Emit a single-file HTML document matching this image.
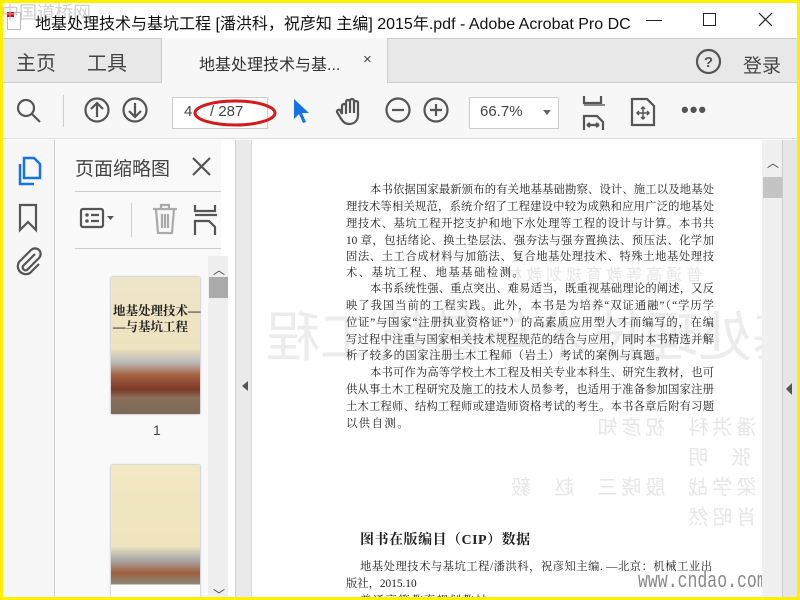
<!DOCTYPE html>
<html><head><meta charset="utf-8"><style>
*{margin:0;padding:0;box-sizing:border-box}
body{width:800px;height:600px;overflow:hidden;background:#ffef00;font-family:"Liberation Sans","Noto Sans CJK SC",sans-serif;position:relative}
.abs{position:absolute}
#win{left:3px;top:3px;width:794px;height:594px;background:#fff;overflow:hidden}
.title{left:0;top:0;width:794px;height:35px;background:#fff;font-size:16px;color:#111}
.tabs{left:0;top:35px;width:794px;height:45px;background:#e8e8e8;border-top:1px solid #ccc;border-bottom:1px solid #ccc}
.tb{left:0;top:80px;width:794px;height:56px;background:#f7f7f7;border-bottom:1px solid #ddd}
.ic{stroke:#555;fill:none;stroke-width:2.2}
.pl{font-family:"Liberation Serif","Noto Serif CJK SC",serif;font-size:11.3px;color:#222;position:absolute;left:343px;width:368px;text-align:justify;text-align-last:justify;white-space:nowrap;letter-spacing:0}
</style></head><body>
<div id="win" class="abs">
<div class="abs title">
 <div class="abs" style="left:4px;top:9px;width:14px;height:18px;background:#fff;border:1px solid #bbb"></div>
 <div class="abs" style="left:4px;top:9px;width:7px;height:5px;background:#e00"></div>
 <div class="abs" style="left:-2px;top:-4px;font-size:18px;color:#bbb;opacity:.7">中国道桥网</div>
 <div class="abs" style="left:32px;top:7px;white-space:nowrap">地基处理技术与基坑工程 [潘洪科，祝彦知 主编] 2015年.pdf - Adobe Acrobat Pro DC</div>
 <div class="abs" style="left:643px;top:17px;width:16px;height:1px;background:#222"></div>
 <div class="abs" style="left:700px;top:10px;width:13px;height:13px;border:1px solid #222"></div>
 <svg class="abs" style="left:755px;top:9px" width="15" height="15"><path d="M1 1L14 14M14 1L1 14" stroke="#222" stroke-width="1.2"/></svg>
</div>
<div class="abs tabs">
 <div class="abs" style="left:13px;top:8px;font-size:20px;color:#444">主页</div>
 <div class="abs" style="left:84px;top:8px;font-size:20px;color:#444">工具</div>
 <div class="abs" style="left:158px;top:-1px;width:227px;height:45px;background:#f7f7f7;border-left:1px solid #ccc;border-right:1px solid #ccc"></div>
 <div class="abs" style="left:196px;top:12px;font-size:16px;color:#333">地基处理技术与基...</div>
 <div class="abs" style="left:360px;top:12px;font-size:15px;color:#444">×</div>
 <svg class="abs" style="left:692px;top:9px" width="27" height="27"><circle cx="13.5" cy="13.5" r="11.5" class="ic"/><text x="13.5" y="19" font-size="15" font-weight="bold" text-anchor="middle" fill="#555" font-family="Liberation Sans">?</text></svg>
 <div class="abs" style="left:740px;top:12px;font-size:19px;color:#444">登录</div>
</div>
<div class="abs tb">
 <svg class="abs" style="left:12px;top:14px" width="30" height="30"><circle cx="11" cy="11" r="8" class="ic"/><path d="M17 17L25 25" class="ic" stroke-width="3"/></svg>
 <div class="abs" style="left:60px;top:12px;width:1px;height:32px;background:#ccc"></div>
 <svg class="abs" style="left:81px;top:14px" width="30" height="30"><circle cx="13" cy="13" r="11.5" class="ic"/><path d="M13 20V6M7 12L13 6L19 12" class="ic"/></svg>
 <svg class="abs" style="left:119px;top:14px" width="30" height="30"><circle cx="13" cy="13" r="11.5" class="ic"/><path d="M13 6V20M7 14L13 20L19 14" class="ic"/></svg>
 <div class="abs" style="left:169px;top:14px;width:96px;height:32px;background:#fff;border:1px solid #ccc"></div>
 <div class="abs" style="left:181px;top:20px;font-size:15px;color:#444">4</div>
 <div class="abs" style="left:207px;top:20px;font-size:15px;color:#444">/ 287</div>
 <svg class="abs" style="left:190px;top:10px" width="100" height="40"><ellipse cx="42" cy="20" rx="40" ry="12" fill="none" stroke="#d51a1a" stroke-width="3"/></svg>
 <svg class="abs" style="left:287px;top:14px" width="24" height="30"><path d="M4 2L4 22L9 17L13 26L16 25L12 16L19 16Z" fill="#1473e6"/></svg>
 <svg class="abs" style="left:332px;top:13px" width="32" height="32"><path d="M7 18V10a2 2 0 0 1 4 0V6a2 2 0 0 1 4 0V5a2 2 0 0 1 4 0v2a2 2 0 0 1 4 0v12c0 6-4 9-9 9c-4 0-6-2-9-7l-3-5a2 2 0 0 1 3-2z M11 10v8M15 6v11M19 7v10" class="ic" stroke-width="2"/></svg>
 <svg class="abs" style="left:382px;top:14px" width="30" height="30"><circle cx="13" cy="13" r="11.5" class="ic"/><path d="M7 13H19" class="ic"/></svg>
 <svg class="abs" style="left:420px;top:14px" width="30" height="30"><circle cx="13" cy="13" r="11.5" class="ic"/><path d="M7 13H19M13 7V19" class="ic"/></svg>
 <div class="abs" style="left:466px;top:14px;width:90px;height:32px;background:#fff;border:1px solid #ccc"></div>
 <div class="abs" style="left:477px;top:20px;font-size:15px;color:#444">66.7%</div>
 <div class="abs" style="left:540px;top:27px;border:4px solid transparent;border-top:5px solid #666"></div>
 <svg class="abs" style="left:578px;top:13px" width="26" height="34"><path d="M3 0V7H20V0M3 34V20H16L22 26V34M6 29H18M6 29l3-2M6 29l3 2M18 29l-3-2M18 29l-3 2" class="ic" stroke-width="2"/><path d="M3 9H24" stroke="#888" stroke-width="2"/></svg>
 <svg class="abs" style="left:627px;top:14px" width="26" height="30"><path d="M2 2H17L24 9V28H2Z" class="ic" stroke-width="2"/><path d="M13 10V22M7 16H19M11 12l2-2 2 2M11 20l2 2 2-2M9 14l-2 2 2 2M17 14l2 2-2 2" stroke="#555" fill="none" stroke-width="1.5"/></svg>
 <div class="abs" style="left:678px;top:14px;font-size:22px;color:#555;letter-spacing:1px;font-weight:bold">•••</div>
</div>
<div class="abs" style="left:0;top:137px;width:52px;height:460px;background:#f7f7f7;border-right:1px solid #ccc"></div>
<svg class="abs" style="left:13px;top:153px" width="28" height="30"><path d="M8 2H18L24 8V22H8Z M4 8V28H18" stroke="#1473e6" stroke-width="2.5" fill="none"/></svg>
<svg class="abs" style="left:14px;top:200px" width="24" height="30"><path d="M3 2H19V27L11 19L3 27Z" class="ic"/></svg>
<svg class="abs" style="left:10px;top:243px" width="32" height="32"><path d="M22 8L10 20a3 3 0 0 0 4 4L26 12a5.5 5.5 0 0 0-8-8L6 16a8 8 0 0 0 11 11l9-9" class="ic" stroke="#777" stroke-width="2.5"/></svg>
<div class="abs" style="left:53px;top:137px;width:165px;height:460px;background:#f9f9f9"></div>
<div class="abs" style="left:72px;top:151px;font-size:19px;color:#444">页面缩略图</div>
<svg class="abs" style="left:187px;top:152px" width="24" height="24"><path d="M3 3L20 20M20 3L3 20" stroke="#555" stroke-width="2.2"/></svg>
<div class="abs" style="left:72px;top:188px;width:146px;height:1px;background:#ccc"></div>
<svg class="abs" style="left:76px;top:203px" width="40" height="26"><rect x="2" y="3" width="22" height="18" rx="2" class="ic" stroke-width="2"/><circle cx="8" cy="9" r="1.8" fill="#555"/><circle cx="8" cy="15" r="1.8" fill="#555"/><path d="M12 9H20M12 15H20" class="ic" stroke-width="2"/><path d="M28 10h7l-3.5 4z" fill="#555"/></svg>
<div class="abs" style="left:128px;top:200px;width:1px;height:34px;background:#ccc"></div>
<svg class="abs" style="left:148px;top:200px" width="28" height="32"><path d="M2 6H26M10 6V2H18V6M5 6L7 30H21L23 6M11 11V25M14 11V25M17 11V25" stroke="#aaa" stroke-width="2.2" fill="none"/></svg>
<svg class="abs" style="left:190px;top:202px" width="26" height="32"><path d="M2 0V6H22V0M2 10H24M2 30V16H16L22 22V30" stroke="#555" stroke-width="2.2" fill="none"/></svg>
<div class="abs" style="left:72px;top:245px;width:146px;height:1px;background:#ccc"></div>
<div class="abs" style="left:205px;top:253px;width:20px;height:344px;background:#eee"></div>
<div class="abs" style="left:210px;top:258px;font-size:12px;color:#444">︿</div>
<div class="abs" style="left:206px;top:274px;width:19px;height:21px;background:#aaa"></div>
<div class="abs" style="left:210px;top:583px;font-size:12px;color:#444">﹀</div>
<div class="abs" style="left:232px;top:137px;width:1px;height:460px;background:#ccc"></div>
<div class="abs" style="left:233px;top:137px;width:15px;height:460px;background:#eaeaea"></div>
<div class="abs" style="left:239px;top:378px;border:5px solid transparent;border-right:6px solid #555;border-left:0"></div>
<div class="abs" style="left:108px;top:274px;width:89px;height:137px;box-shadow:0 0 2px #999;background:linear-gradient(#efe6c8 0%,#eee3bf 52%,#bbb 62%,#a5603f 72%,#7a3828 82%,#8a6e58 88%,#7a6a58 100%)"></div>
<div class="abs" style="left:110px;top:298px;font-family:'Liberation Serif','Noto Serif CJK SC',serif;font-weight:bold;font-size:12.5px;color:#222;white-space:nowrap">地基处理技术—</div>
<div class="abs" style="left:110px;top:314px;font-family:'Liberation Serif','Noto Serif CJK SC',serif;font-weight:bold;font-size:12.5px;color:#222;white-space:nowrap">—与基坑工程</div>
<div class="abs" style="left:150px;top:419px;font-size:14px;color:#444">1</div>
<div class="abs" style="left:108px;top:462px;width:89px;height:135px;box-shadow:0 0 2px #999;background:linear-gradient(#f2e8c4 0%,#efe4bd 60%,#aaa 70%,#a06040 80%,#887 88%,#fff 89%,#fff 100%)"></div>
<div class="abs" style="left:248px;top:137px;width:511px;height:460px;background:#fff;border-left:1px solid #ddd;overflow:hidden">
 <div class="abs" style="left:14px;top:153px;font-size:54px;color:#ececec;transform:scaleX(-1);white-space:nowrap;font-family:'Noto Sans CJK SC',sans-serif">地基处理技术与基坑工程</div>
 <div class="abs" style="left:250px;top:121px;font-size:16px;color:#e6e6e6;transform:scaleX(-1);letter-spacing:4px">普通高等教育规划教材</div>
 <div class="abs" style="left:255px;top:273px;font-size:20px;color:#e6e6e6;transform:scaleX(-1);letter-spacing:4px;line-height:30px;white-space:pre">主  编  潘洪科  祝彦知
副主编  张  明
参  编  梁学战  殷晓三  赵  毅
主  审  肖昭然</div>
</div>
<div class="pl" style="top:178px;padding-left:24px">本书依据国家最新颁布的有关地基基础勘察、设计、施工以及地基处</div>
<div class="pl" style="top:195px">理技术等相关规范，系统介绍了工程建设中较为成熟和应用广泛的地基处</div>
<div class="pl" style="top:212px">理技术、基坑工程开挖支护和地下水处理等工程的设计与计算。本书共</div>
<div class="pl" style="top:229px">10 章，包括绪论、换土垫层法、强夯法与强夯置换法、预压法、化学加</div>
<div class="pl" style="top:245px">固法、土工合成材料与加筋法、复合地基处理技术、特殊土地基处理技</div>
<div class="pl" style="top:261px;text-align-last:left;letter-spacing:1.5px">术、基坑工程、地基基础检测。</div>
<div class="pl" style="top:277px;padding-left:24px">本书系统性强、重点突出、难易适当，既重视基础理论的阐述，又反</div>
<div class="pl" style="top:294px">映了我国当前的工程实践。此外，本书是为培养“双证通融”（“学历学</div>
<div class="pl" style="top:311px">位证”与国家“注册执业资格证”）的高素质应用型人才而编写的，在编</div>
<div class="pl" style="top:328px">写过程中注重与国家相关技术规程规范的结合与应用，同时本书精选并解</div>
<div class="pl" style="top:344px;text-align-last:left;letter-spacing:.6px">析了较多的国家注册土木工程师（岩土）考试的案例与真题。</div>
<div class="pl" style="top:361px;padding-left:24px">本书可作为高等学校土木工程及相关专业本科生、研究生教材，也可</div>
<div class="pl" style="top:378px">供从事土木工程研究及施工的技术人员参考，也适用于准备参加国家注册</div>
<div class="pl" style="top:395px">土木工程师、结构工程师或建造师资格考试的考生。本书各章后附有习题</div>
<div class="pl" style="top:412px;text-align-last:left;letter-spacing:1.5px">以供自测。</div>
<div class="abs" style="left:357px;top:526px;font-family:'Liberation Serif','Noto Serif CJK SC',serif;font-weight:bold;font-size:14px;color:#222;letter-spacing:.5px">图书在版编目（CIP）数据</div>
<div class="pl" style="top:555px;left:357px;width:352px">地基处理技术与基坑工程/潘洪科，祝彦知主编. —北京：机械工业出</div>
<div class="pl" style="top:572px;text-align-last:left">版社，2015.10</div>
<div class="pl" style="top:589px;left:357px;text-align-last:left;letter-spacing:1.5px">普通高等教育规划教材</div>
<div class="abs" style="left:635px;top:566px;font-family:'Liberation Mono',monospace;font-size:22px;color:#888;transform:scaleX(.75);transform-origin:left;white-space:nowrap">www.cndao.com</div>
<div class="abs" style="left:759px;top:137px;width:20px;height:460px;background:#f0f0f0"></div>
<div class="abs" style="left:764px;top:151px;font-size:12px;color:#444">︿</div>
<div class="abs" style="left:760px;top:174px;width:19px;height:21px;background:#c4c4c4"></div>
<div class="abs" style="left:779px;top:137px;width:1px;height:460px;background:#ccc"></div>
<div class="abs" style="left:780px;top:137px;width:14px;height:460px;background:#e6e6e6"></div>
<div class="abs" style="left:783px;top:380px;border:6px solid transparent;border-right:6px solid #555;border-left:0"></div>
</div>
</body></html>
